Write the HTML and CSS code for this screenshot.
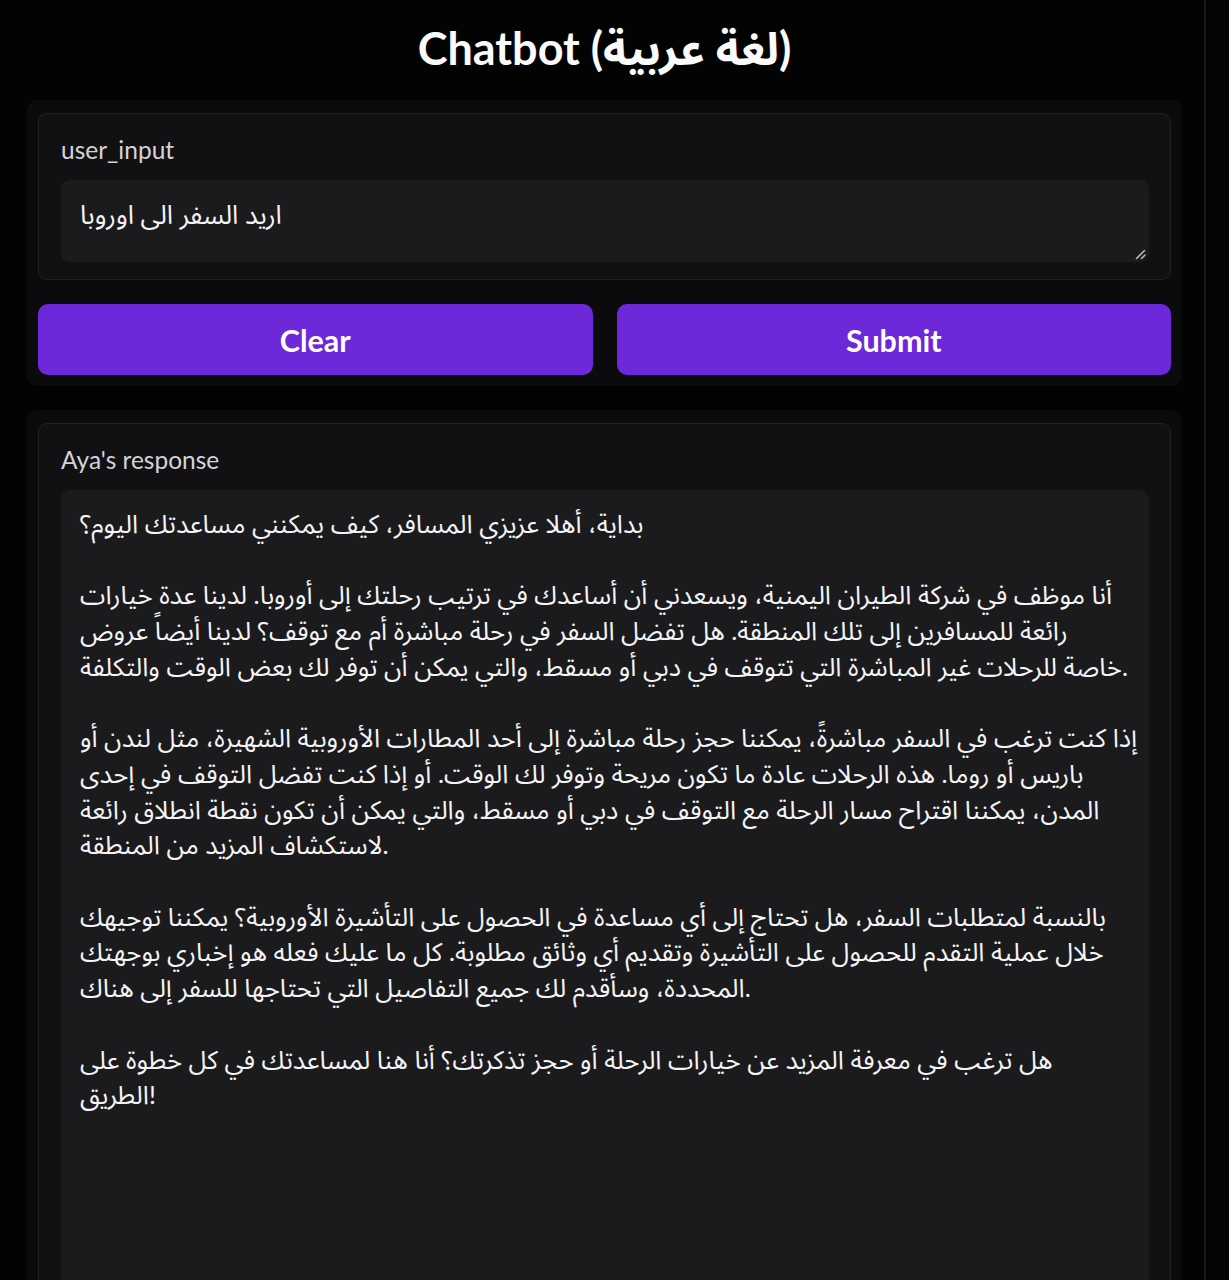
FILE: index.html
```html
<!DOCTYPE html>
<html lang="en">
<head>
<meta charset="utf-8">
<title>Chatbot</title>
<link rel="stylesheet" href="styles.css">
</head>
<body>
<div class="app">
  <h1 class="title">Chatbot (لغة عربية)</h1>

  <section class="panel">
    <div class="block">
      <label class="label">user_input</label>
      <div class="field field-input">
        <div class="line">اريد السفر الى اوروبا</div>
        <svg class="resize" width="12" height="12" viewBox="0 0 12 12">
          <line x1="1.5" y1="10.5" x2="9.5" y2="2.5" stroke="#b8b8bc" stroke-width="1.6" stroke-linecap="round"/>
          <line x1="6.5" y1="10.5" x2="10" y2="7" stroke="#b8b8bc" stroke-width="1.6" stroke-linecap="round"/>
        </svg>
      </div>
    </div>
    <div class="buttons">
      <button class="btn">Clear</button>
      <button class="btn">Submit</button>
    </div>
  </section>

  <section class="panel panel-out">
    <div class="block block-out">
      <label class="label">Aya's response</label>
      <div class="field field-output">
        <div class="line">بداية، أهلا عزيزي المسافر، كيف يمكنني مساعدتك اليوم؟</div>
        <div class="line blank">&nbsp;</div>
        <div class="line">أنا موظف في شركة الطيران اليمنية، ويسعدني أن أساعدك في ترتيب رحلتك إلى أوروبا. لدينا عدة خيارات</div>
        <div class="line">رائعة للمسافرين إلى تلك المنطقة. هل تفضل السفر في رحلة مباشرة أم مع توقف؟ لدينا أيضاً عروض</div>
        <div class="line">خاصة للرحلات غير المباشرة التي تتوقف في دبي أو مسقط، والتي يمكن أن توفر لك بعض الوقت والتكلفة.</div>
        <div class="line blank">&nbsp;</div>
        <div class="line">إذا كنت ترغب في السفر مباشرةً، يمكننا حجز رحلة مباشرة إلى أحد المطارات الأوروبية الشهيرة، مثل لندن أو</div>
        <div class="line">باريس أو روما. هذه الرحلات عادة ما تكون مريحة وتوفر لك الوقت. أو إذا كنت تفضل التوقف في إحدى</div>
        <div class="line">المدن، يمكننا اقتراح مسار الرحلة مع التوقف في دبي أو مسقط، والتي يمكن أن تكون نقطة انطلاق رائعة</div>
        <div class="line">لاستكشاف المزيد من المنطقة.</div>
        <div class="line blank">&nbsp;</div>
        <div class="line">بالنسبة لمتطلبات السفر، هل تحتاج إلى أي مساعدة في الحصول على التأشيرة الأوروبية؟ يمكننا توجيهك</div>
        <div class="line">خلال عملية التقدم للحصول على التأشيرة وتقديم أي وثائق مطلوبة. كل ما عليك فعله هو إخباري بوجهتك</div>
        <div class="line">المحددة، وسأقدم لك جميع التفاصيل التي تحتاجها للسفر إلى هناك.</div>
        <div class="line blank">&nbsp;</div>
        <div class="line">هل ترغب في معرفة المزيد عن خيارات الرحلة أو حجز تذكرتك؟ أنا هنا لمساعدتك في كل خطوة على</div>
        <div class="line">الطريق!</div>
      </div>
    </div>
  </section>
</div>
</body>
</html>
```

FILE: styles.css
```css
html, body {
  margin: 0;
  padding: 0;
  background: #040405;
  height: 100%;
  overflow: hidden;
}

body {
  font-family: "Source Sans Pro", Lato, "Noto Sans Arabic", "Noto Sans", "DejaVu Sans", sans-serif;
  color: #f3f3f5;
}

.app {
  width: 1206px;
  min-height: 1280px;
  border-right: 2px solid #17171a;
  box-sizing: border-box;
  padding: 0 22px 0 27px;
  background: #030304;
}

.title {
  margin: 0;
  padding-top: 21px;
  height: 100px;
  box-sizing: border-box;
  text-align: center;
  font-size: 45px;
  line-height: 54px;
  font-weight: 700;
  color: #fafafa;
}

.panel {
  background: #0b0b0d;
  border-radius: 10px;
  padding: 13px 11px 11px 11px;
  width: 1155px;
  box-sizing: border-box;
}

.panel-out {
  margin-top: 24px;
  padding-bottom: 0;
}

.block {
  background: #111113;
  border: 1px solid #212124;
  border-radius: 9px;
  padding: 20px 21px 17px 22px;
}

.block-out {
  padding-bottom: 0;
  border-bottom: none;
  border-bottom-left-radius: 0;
  border-bottom-right-radius: 0;
}

.label {
  display: block;
  font-size: 24.5px;
  line-height: 32px;
  color: #d4d4d8;
  margin-bottom: 14px;
}

.field {
  background: #1b1b1d;
  border-radius: 9px;
  padding: 18px 19px 0 19px;
  font-size: 25.7px;
  line-height: 35.7px;
  color: #f4f4f6;
  direction: ltr;
  text-align: left;
}

.field-input {
  position: relative;
  height: 82px;
  box-sizing: border-box;
  padding-top: 16px;
  line-height: 36px;
  font-size: 26.2px;
}

.field-output {
  padding-top: 16px;
  height: 820px;
  border-bottom-left-radius: 0;
  border-bottom-right-radius: 0;
}

.line {
  white-space: nowrap;
}

.resize {
  position: absolute;
  right: 2px;
  bottom: 2px;
}

.buttons {
  display: flex;
  gap: 24px;
  margin-top: 24px;
}

.btn {
  flex: 1;
  height: 71px;
  border: none;
  border-radius: 10px;
  background: #6d28d9;
  color: #ffffff;
  font-family: "Source Sans Pro", Lato, "Noto Sans", sans-serif;
  font-size: 30.5px;
  font-weight: 700;
}
```
